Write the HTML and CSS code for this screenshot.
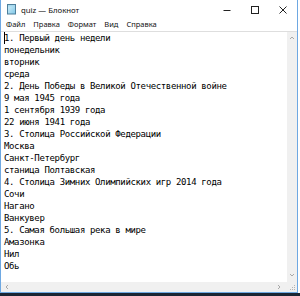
FILE: index.html
```html
<!DOCTYPE html>
<html lang="ru">
<head>
<meta charset="utf-8">
<title>quiz — Блокнот</title>
<link rel="stylesheet" href="styles.css">
</head>
<body>
<div class="window">
  <div class="titlebar">
    <svg class="app-icon" width="11" height="12" viewBox="0 0 11 12">
      <defs>
        <linearGradient id="pg" x1="0" y1="0" x2="1" y2="1">
          <stop offset="0" stop-color="#d6f0fb"/>
          <stop offset="1" stop-color="#7fc7e6"/>
        </linearGradient>
      </defs>
      <rect x="1.5" y="1.5" width="8" height="9.5" fill="url(#pg)" stroke="#4d7f9c" stroke-width="1"/>
      <rect x="2" y="2" width="7" height="1.5" fill="#a7d9ee"/>
    </svg>
    <span class="title">quiz — Блокнот</span>
    <div class="controls">
      <div class="ctl">
        <svg width="10" height="10" viewBox="0 0 10 10"><path d="M1.5 5.5h7" stroke="#222" stroke-width="1"/></svg>
      </div>
      <div class="ctl">
        <svg width="10" height="10" viewBox="0 0 10 10"><rect x="1.5" y="1.5" width="7" height="7" fill="none" stroke="#222" stroke-width="1"/></svg>
      </div>
      <div class="ctl">
        <svg width="10" height="10" viewBox="0 0 10 10"><path d="M1.5 1.5l7 7M8.5 1.5l-7 7" stroke="#222" stroke-width="1"/></svg>
      </div>
    </div>
  </div>
  <div class="menubar">
    <span class="menu-item">Файл</span>
    <span class="menu-item">Правка</span>
    <span class="menu-item">Формат</span>
    <span class="menu-item">Вид</span>
    <span class="menu-item">Справка</span>
  </div>
  <div class="editor">
    <div class="text"><div class="line"><span class="caret"></span>1. Первый день недели</div><div class="line">понедельник</div><div class="line">вторник</div><div class="line">среда</div><div class="line">2. День Победы в Великой Отечественной войне</div><div class="line">9 мая 1945 года</div><div class="line">1 сентября 1939 года</div><div class="line">22 июня 1941 года</div><div class="line">3. Столица Российской Федерации</div><div class="line">Москва</div><div class="line">Санкт-Петербург</div><div class="line">станица Полтавская</div><div class="line">4. Столица Зимних Олимпийских игр 2014 года</div><div class="line">Сочи</div><div class="line">Нагано</div><div class="line">Ванкувер</div><div class="line">5. Самая большая река в мире</div><div class="line">Амазонка</div><div class="line">Нил</div><div class="line">Обь</div></div>
    <div class="vscroll">
      <svg width="10" height="10" viewBox="0 0 10 10"><path d="M3 6l2-2 2 2" fill="none" stroke="#a8a8a8" stroke-width="1"/></svg>
      <svg width="10" height="10" viewBox="0 0 10 10"><path d="M3 4l2 2 2-2" fill="none" stroke="#a8a8a8" stroke-width="1"/></svg>
    </div>
    <div class="hscroll">
      <svg width="10" height="10" viewBox="0 0 10 10"><path d="M6 3l-2 2 2 2" fill="none" stroke="#a8a8a8" stroke-width="1"/></svg>
      <svg width="10" height="10" viewBox="0 0 10 10"><path d="M4 3l2 2-2 2" fill="none" stroke="#a8a8a8" stroke-width="1"/></svg>
    </div>
    <div class="grip">
      <svg width="10" height="10" viewBox="0 0 10 10" fill="#b4b4b4"><rect x="7" y="3" width="1" height="1"/><rect x="5" y="5" width="1" height="1"/><rect x="7" y="5" width="1" height="1"/><rect x="3" y="7" width="1" height="1"/><rect x="5" y="7" width="1" height="1"/><rect x="7" y="7" width="1" height="1"/></svg>
    </div>
  </div>
</div>
<div class="taskbar"></div>
</body>
</html>
```

FILE: styles.css
```css
html, body {
  margin: 0;
  padding: 0;
  background: #ffffff;
  width: 300px;
  height: 296px;
  overflow: hidden;
}

.window {
  width: 296px;
  height: 292px;
  border: 1px solid #6ea8e2;
  border-top: none;
  background: #ffffff;
  display: flex;
  flex-direction: column;
  font-family: "Noto Sans", "Open Sans", sans-serif;
  color: #000;
}

.titlebar {
  height: 18px;
  display: flex;
  align-items: center;
  flex: none;
}

.app-icon {
  margin-left: 5px;
  margin-right: 4px;
  flex: none;
}

.title {
  font-size: 7.8px;
  color: #111;
  line-height: 18px;
  padding-top: 1px;
}

.controls {
  margin-left: auto;
  display: flex;
  height: 18px;
}

.ctl {
  width: 28px;
  height: 18px;
  display: flex;
  align-items: center;
  justify-content: center;
}

.ctl svg {
  margin-top: 1px;
}

.menubar {
  height: 13px;
  display: flex;
  align-items: center;
  gap: 8px;
  padding-left: 5px;
  flex: none;
}

.menu-item {
  font-size: 7.5px;
  line-height: 13px;
  color: #111;
}

.editor {
  flex: 1;
  border-top: 1px solid #dedede;
  display: grid;
  grid-template-columns: 1fr 10px;
  grid-template-rows: 1fr 10px;
  min-height: 0;
}

.text {
  padding: 0 0 0 3px;
  font-family: "DejaVu Sans Mono", "Liberation Mono", monospace;
  font-size: 9px;
  letter-spacing: -0.36px;
  line-height: 12px;
  color: #000;
  white-space: pre;
  overflow: hidden;
}

.line {
  height: 12px;
}

.caret {
  display: inline-block;
  width: 0;
  height: 12px;
  border-left: 1px solid #000;
  margin-right: -1px;
  vertical-align: top;
}

.vscroll {
  background: #f0f0f0;
  display: flex;
  flex-direction: column;
  justify-content: space-between;
  padding: 1px 0 2px;
}

.hscroll {
  background: #f0f0f0;
  display: flex;
  justify-content: space-between;
  align-items: center;
  padding: 0 3px 0 1px;
}

.grip {
  background: #f0f0f0;
}

.grip svg, .vscroll svg, .hscroll svg {
  display: block;
}

.taskbar {
  height: 3px;
  background: #1b2533;
}
```
